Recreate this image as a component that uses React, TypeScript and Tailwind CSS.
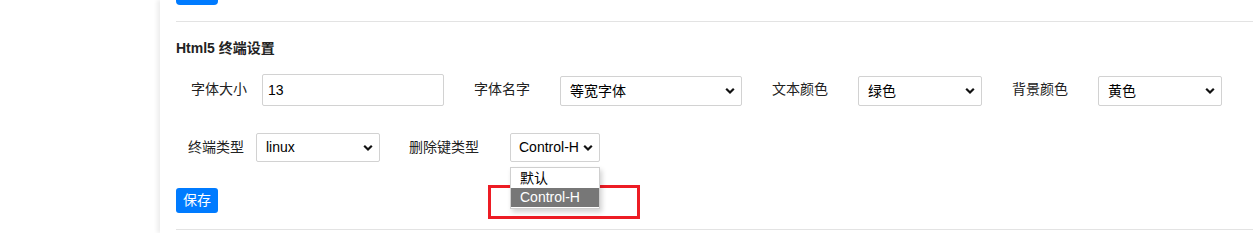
import React from "react";

const font = "font-['Liberation_Sans','Noto_Sans_CJK_SC',sans-serif]";

function Chevron() {
  return (
    <svg
      className="pointer-events-none absolute right-[7px] top-1/2 -translate-y-1/2"
      width="10"
      height="7"
      viewBox="0 0 10 7"
    >
      <path d="M1.2 1.2 L5 5 L8.8 1.2" fill="none" stroke="#111" strokeWidth="2.2" />
    </svg>
  );
}

function Select({ value, options, w, h = "h-[30px]", pl = "pl-[9px]" }: { value: string; options: string[]; w: string; h?: string; pl?: string }) {
  return (
    <div className={`relative ${w} ${h}`}>
      <select
        defaultValue={value}
        className={`h-full w-full appearance-none rounded-[2px] border border-[#d2d2d2] bg-white ${pl} pr-[14px] text-[14px] text-black outline-none ${font}`}
      >
        {options.map((o) => (
          <option key={o}>{o}</option>
        ))}
      </select>
      <Chevron />
    </div>
  );
}

function Label({ children, className }: { children: React.ReactNode; className: string }) {
  return <span className={`text-[14px] leading-5 text-[#222] ${className}`}>{children}</span>;
}

export default function App() {
  return (
    <div className={`relative flex h-[233px] w-[1253px] overflow-hidden bg-white ${font}`}>
      <div className="w-[160px] shrink-0 bg-white" />
      <div className="flex-1 pl-[16px] shadow-[-3px_0_4px_rgba(0,0,0,0.07)]">
        <div className="h-[5px] w-[42px] rounded-b-[4px] bg-[#007bff]" />
        <div className="mt-[16px] border-t border-[#e3e3e3]" />

        <h3 className="mt-[16px] text-[14px] font-bold leading-5 text-[#222]">Html5 终端设置</h3>

        {/* first row */}
        <div className="mt-[16px] flex h-[32px] items-center">
          <Label className="ml-[15px] mr-[15px] -mt-[3px]">字体大小</Label>
          <input
            defaultValue="13"
            className={`h-[32px] w-[182px] rounded-[2px] border border-[#d2d2d2] px-[5px] text-[14px] text-black outline-none ${font}`}
          />
          <Label className="ml-[30px] mr-[30px] -mt-[3px]">字体名字</Label>
          <div className="mt-[2px]">
            <Select value="等宽字体" options={["等宽字体", "宋体", "微软雅黑"]} w="w-[182px]" />
          </div>
          <Label className="ml-[30px] mr-[30px] -mt-[3px]">文本颜色</Label>
          <div className="mt-[2px]">
            <Select value="绿色" options={["白色", "绿色", "黄色"]} w="w-[124px]" />
          </div>
          <Label className="ml-[30px] mr-[30px] -mt-[3px]">背景颜色</Label>
          <div className="mt-[2px]">
            <Select value="黄色" options={["黑色", "白色", "黄色"]} w="w-[124px]" />
          </div>
        </div>

        {/* second row */}
        <div className="mt-[27px] flex h-[29px] items-center">
          <Label className="ml-[12px] mr-[12px] -mt-[2px]">终端类型</Label>
          <Select value="linux" options={["linux", "xterm", "vt100"]} w="w-[124px]" h="h-[29px]" />
          <Label className="ml-[29px] mr-[31px] -mt-[2px]">删除键类型</Label>
          <Select value="Control-H" options={["默认", "Control-H"]} w="w-[90px]" h="h-[29px]" pl="pl-[8px]" />
        </div>

        <button className="mt-[26px] flex h-[25px] w-[42px] items-center justify-center rounded-[3px] bg-[#007bff] text-[14px] text-white">
          保存
        </button>

        <div className="mt-[16px] border-t border-[#e3e3e3]" />
      </div>

      {/* annotation box */}
      <div className="absolute left-[488px] top-[185px] h-[34px] w-[152px] border-[3px] border-[#ed1c24]" />

      {/* open dropdown list */}
      <div className="absolute left-[510px] top-[167px] w-[90px] border border-[#cfcfcf] bg-white py-[1px] text-[14px] shadow-[2px_3px_5px_rgba(0,0,0,0.18)]">
        <div className="h-[19px] pl-[9px] leading-[19px] text-black">默认</div>
        <div className="h-[19px] bg-[#777] pl-[9px] leading-[19px] text-white">Control-H</div>
      </div>
    </div>
  );
}
